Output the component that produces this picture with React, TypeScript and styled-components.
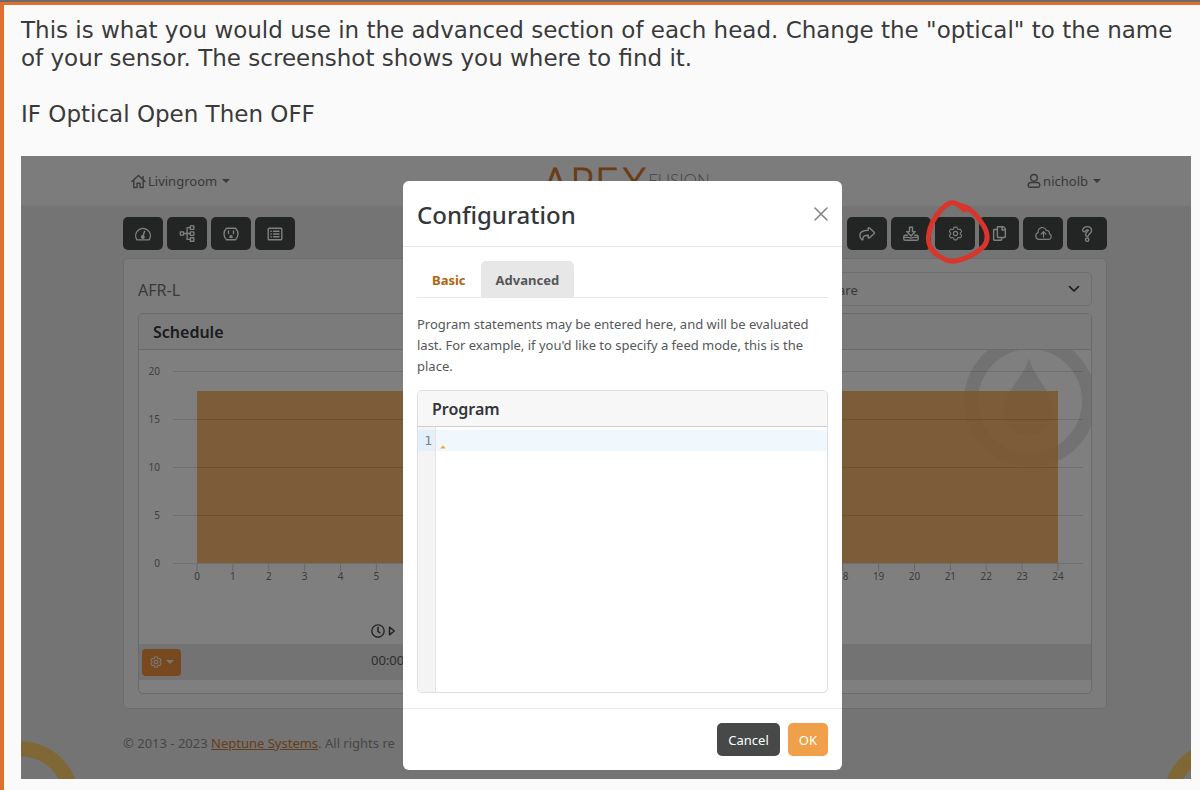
import React from "react";
import styled, { createGlobalStyle } from "styled-components";
import { HiOutlineCog6Tooth, HiOutlineCloudArrowUp } from "react-icons/hi2";
import { FaRegCopy, FaRegClock } from "react-icons/fa";

const GlobalStyle = createGlobalStyle`
  *, *::before, *::after { box-sizing: border-box; }
  body { margin: 0; background: #fafafa; }
  button, select, textarea { font: inherit; margin: 0; }
`;

const Post = styled.article`
  border-top: 3px solid #dd7230;
  border-left: 4px solid #dd7230;
  padding: 11px 9px 11px 17px;
  background: #fafafa;
`;

const TopRule = styled.div`
  height: 2px;
  background: #6f6b69;
`;

const PostText = styled.p`
  margin: 0 0 28px;
  font: 23px/28px "DejaVu Sans", Verdana, sans-serif;
  color: #3a3a3a;
`;

const Screen = styled.section`
  position: relative;
  overflow: hidden;
  background: #e9e9e9;
  color: #666;
  font: 13px/20px "Noto Sans", sans-serif;
`;

const TopBar = styled.header`
  display: flex;
  justify-content: space-between;
  align-items: center;
  height: 50px;
  padding: 0 90px 0 110px;
  background: #f6f9f7;
`;

const NavButton = styled.button`
  display: flex;
  align-items: center;
  gap: 2px;
  padding: 0;
  border: 0;
  background: none;
  color: #747474;
`;

const Caret = styled.span`
  margin-left: 3px;
  border: 4px solid transparent;
  border-top-color: currentColor;
  border-bottom: 0;
`;

const Brand = styled.div`
  display: flex;
  align-items: flex-start;
  align-self: flex-start;
  margin-right: 6px;
  color: #d9762c;
  font: 200 41px/56px "DejaVu Sans", sans-serif;
  -webkit-text-stroke: 1px currentColor;
`;

const BrandSmall = styled.span`
  margin-top: 15px;
  color: #8c8c8c;
  font: 300 17px/20px Lato, sans-serif;
  -webkit-text-stroke: 0;
`;

const Content = styled.main`
  padding: 11px 84px 0 102px;
`;

const Toolbar = styled.div`
  display: flex;
  justify-content: space-between;
  margin-bottom: 8px;
`;

const ToolGroup = styled.div`
  display: flex;
  gap: 4px;
`;

const ToolButton = styled.button`
  display: grid;
  place-items: center;
  width: 40px;
  height: 33px;
  padding: 0;
  border: 0;
  border-radius: 5px;
  background: #474a49;
  color: #fff;
`;

const Card = styled.section`
  padding: 13px 14px 14px;
  border: 1px solid #d9dbda;
  border-radius: 5px;
  background: #f6f9f7;
`;

const CardTop = styled.div`
  display: flex;
  justify-content: space-between;
  align-items: center;
  margin-bottom: 7px;
`;

const OutputName = styled.h2`
  margin: 0;
  padding-top: 2px;
  font-size: 16px;
  font-weight: 400;
  color: #747474;
`;

const SelectWrap = styled.label`
  display: grid;
  grid-template-columns: 267px;
  align-items: center;

  > * { grid-area: 1 / 1; }
  > svg { justify-self: end; margin-right: 12px; color: #333; }
`;

const Select = styled.select`
  width: 100%;
  height: 34px;
  padding: 2px 12px 0;
  appearance: none;
  border: 1px solid #dcdedd;
  border-radius: 5px;
  background: transparent;
  color: #747474;
`;

const Panel = styled.section<{ $tone: string }>`
  overflow: hidden;
  border: 1px solid ${(p) => p.$tone};
  border-radius: 5px;
  background: #fff;
`;

const PanelTitle = styled.h3<{ $tone: string }>`
  margin: 0;
  padding: 2px 14px 0;
  border-bottom: 1px solid ${(p) => p.$tone};
  background: #f7f7f7;
  color: #343638;
  font-size: 16px;
  font-weight: 600;
  line-height: 33px;
`;

const Chart = styled.svg`
  display: block;
  width: 100%;
  font: 10px "Noto Sans", sans-serif;
`;

const ScheduleTable = styled.table`
  width: 100%;
  margin-bottom: 13px;
  border-collapse: collapse;
  color: #5c5c5c;

  th, td { padding: 0; text-align: left; vertical-align: middle; }
  th { height: 28px; color: #444; }
  td { height: 36px; background: #e6e6e6; }
  td + td { padding-bottom: 4px; }
  th:first-child, td:first-child { width: 232px; padding-left: 3px; }
  th svg { vertical-align: middle; }
`;

const RowMenu = styled.button`
  display: flex;
  align-items: center;
  justify-content: center;
  width: 39px;
  height: 27px;
  padding: 0;
  border: 0;
  border-radius: 4px;
  background: #f0923e;
  color: #f2ede8;

  > svg { stroke-width: 2; }
`;

const Footer = styled.footer`
  padding: 22px 84px 24px 102px;
  line-height: 24px;
  color: #8c8c8c;

  a { color: #cc7c36; }
`;

const Ring = styled.svg<{ $side: "left" | "right" }>`
  position: absolute;
  bottom: 0;
  ${(p) => p.$side}: 0;
`;

const Backdrop = styled.div`
  position: absolute;
  inset: 0;
  display: flex;
  justify-content: center;
  align-items: flex-start;
  padding: 25px 0 9px 33px;
  background: rgba(0, 0, 0, 0.5);
`;

const Dialog = styled.div`
  width: 439px;
  border-radius: 6px;
  background: #fff;
  color: #55585a;
`;

const DialogHead = styled.div`
  display: flex;
  justify-content: space-between;
  align-items: center;
  height: 66px;
  padding: 0 14px;
  border-bottom: 1px solid #e6e6e6;
`;

const DialogTitle = styled.h1`
  margin: 0;
  padding-top: 2px;
  color: #34373a;
  font-size: 24px;
  font-weight: 500;
  line-height: 36px;
`;

const CloseButton = styled.button`
  display: grid;
  padding: 0;
  border: 0;
  background: none;
  color: #808080;
`;

const DialogBody = styled.div`
  padding: 14px 14px 15px;
`;

const Tabs = styled.div`
  display: flex;
  border-bottom: 1px solid #e6e6e6;
`;

const Tab = styled.button<{ $active?: boolean }>`
  height: 36px;
  padding: 2px 15px 0;
  border: 0;
  border-radius: 5px 5px 0 0;
  background: ${(p) => (p.$active ? "#e7e7e7" : "transparent")};
  color: ${(p) => (p.$active ? "#53575c" : "#b3640f")};
  font-weight: 700;
`;

const Help = styled.p`
  margin: 16px 0 13px;
  line-height: 21px;
`;

const Editor = styled.div`
  display: grid;
  grid-template-columns: 18px 1fr;
  height: 265px;
`;

const Gutter = styled.div`
  padding-top: 3px;
  border-right: 1px solid #e4e4e4;
  background: #f4f4f4;
`;

const LineNumber = styled.div`
  padding-right: 3px;
  background: #e3f0fb;
  color: #7d8287;
  font: 13px/21px "DejaVu Sans Mono", monospace;
  text-align: right;
`;

const Code = styled.div`
  display: grid;
  grid-template-rows: 1fr;
  padding-top: 3px;

  > * { grid-area: 1 / 1; }
  > svg { margin: 15px 0 0 4px; }
`;

const CodeInput = styled.textarea`
  width: 100%;
  padding: 0 4px;
  border: 0;
  outline: 0;
  resize: none;
  background: linear-gradient(#f0f7fd, #f0f7fd) 0 0 / 100% 21px no-repeat;
  font: 13px/21px "DejaVu Sans Mono", monospace;
`;

const DialogFoot = styled.div`
  display: flex;
  justify-content: flex-end;
  gap: 8px;
  padding: 14px;
  border-top: 1px solid #e9e9e9;
`;

const Action = styled.button<{ $primary?: boolean }>`
  height: 33px;
  padding: 0 11px;
  border: 0;
  border-radius: 5px;
  background: ${(p) => (p.$primary ? "#f0a04b" : "#464948")};
  color: #fff;
`;

const Marker = styled.svg`
  position: absolute;
  top: 42px;
  right: 199px;
`;

const Line = ({ w = 18, h = 18, size = w, children }: { w?: number; h?: number; size?: number; children: React.ReactNode }) => (
  <svg width={size} height={(size * h) / w} viewBox={`0 0 ${w} ${h}`} fill="none" stroke="currentColor" strokeWidth="1.4" strokeLinejoin="round" strokeLinecap="round" aria-hidden="true">
    {children}
  </svg>
);

const leftTools: [string, React.ReactNode][] = [
  ["Dashboard", <Line><path d="M2.700 14.500a7.300 7.300 0 1 1 12.600 0c-.2.300-.4.400-.7.400H3.400c-.3 0-.5-.1-.7-.4Z" /><circle cx="8.800" cy="12.100" r="1.300" fill="currentColor" /><path d="M9 11 10.600 6.300" /></Line>],
  ["Network", <Line size={17}><path d="M1.400 7.300h3.400v3.400H1.400zM12 .9h3.700v3.700H12zM12 7.200h3.700v3.700H12zM12 13.500h3.700v3.700H12zM4.800 9H12M12 2.800H8.600v12.500H12" /></Line>],
  ["Outlets", <Line><path d="M4.500 3.300h9c1.700 1.600 2.500 3.500 2.500 5.700s-.8 4.100-2.500 5.700h-9C2.800 13.100 2 11.200 2 9s.8-4.100 2.500-5.700Z" /><path d="M6.500 6v2.500M11.500 6v2.500M8 12.400v-.6a1 1 0 0 1 2 0v.6Z" /></Line>],
  ["Log", <Line><rect x="2.200" y="3.300" width="13.600" height="11.400" rx="1" /><path d="M4.900 6.300h.4M4.900 9h.4M4.900 11.700h.4M7.500 6.300H13M7.500 9H13M7.500 11.700H13" /></Line>],
];

const rightTools: [string, React.ReactNode][] = [
  ["Share", <Line><path d="M10.300 3.200c0-.6.6-.8 1-.4l4.900 4.500c.4.3.4.8 0 1.100l-4.900 4.500c-.4.4-1 .1-1-.4v-2.200C7 10.300 5 10.700 4.900 13.200c0 .8.300 1.500-.1 1.700-.4.1-.8-.2-1.100-.5-1.100-1-1.900-2.400-1.900-4C1.900 6.800 5.500 5.400 10.300 5.300Z" /></Line>],
  ["Download", <Line><path d="M7.500 2.300h3v4.300h2.800L9 11 4.700 6.600h2.800ZM5.300 10.300H3.200c-.8 0-1.400.6-1.400 1.400v2.200c0 .8.600 1.400 1.400 1.400h11.600c.8 0 1.400-.6 1.400-1.400v-2.200c0-.8-.6-1.400-1.400-1.400h-2.100M2 12.400h4.300l2.700.8 2.700-.8H16" /></Line>],
  ["Configuration", <HiOutlineCog6Tooth size={17} />],
  ["Copy", <FaRegCopy size={15} />],
  ["Upload", <HiOutlineCloudArrowUp size={19} />],
  ["Help", (
    <svg width="18" height="18" viewBox="0 0 18 18" fill="none" strokeLinecap="round" strokeLinejoin="round" aria-hidden="true">
      {[["#fff", 4.6], ["#474a49", 1.9]].map(([c, w]) => (
        <g key={c} stroke={c as string} strokeWidth={w}>
          <path d="M6.300 5.200C6.900 3.800 8 3.300 9.200 3.300c1.600 0 2.700.9 2.700 2.300 0 2-2.700 2-2.700 4.200" />
          <path d="M9.200 14.600v.1" />
        </g>
      ))}
    </svg>
  )],
];

const hourX = (h: number) => 58 + h * 35.875;

function ScheduleChart() {
  return (
    <Chart viewBox="0 0 952 266" role="img" aria-label="Schedule">
      <g fill="#e4e4e4">
        <path fillRule="evenodd" d="M891-15a66 66 0 1 0 0 132 66 66 0 0 0 0-132Zm0 14a52 52 0 1 1 0 104 52 52 0 0 1 0-104Z" />
        <path d="M890 7c2 17 23 34 24 53 0 15-11 25-25 25s-25-10-25-25c1-19 24-36 26-53Z" />
      </g>
      <path d="M58 41H919V213H58Z" fill="#f7ae5f" fillOpacity="0.88" />
      {[20, 15, 10, 5, 0].map((v, i) => (
        <g key={v}>
          <path d={`M34 ${21.5 + i * 48}H944`} stroke="#000" strokeOpacity="0.12" />
          <text x="21" y={25 + i * 48} textAnchor="end" fill="#808080">{v}</text>
        </g>
      ))}
      {Array.from({ length: 25 }, (_, h) => (
        <g key={h}>
          <path d={`M${hourX(h)} 213v8`} stroke="#cfcfcf" />
          <text x={hourX(h)} y="230" textAnchor="middle" fill="#787878">{h}</text>
        </g>
      ))}
    </Chart>
  );
}

export default function App() {
  return (
    <>
      <GlobalStyle />
      <TopRule />
      <Post>
        <PostText>
          This is what you would use in the advanced section of each head. Change the "optical" to the name of your sensor. The screenshot shows you where to find it.
        </PostText>
        <PostText>IF Optical Open Then OFF</PostText>

        <Screen>
          <TopBar>
            <NavButton type="button">
              <Line w={15} h={15}><path d="M1 7.500 7.500 1.500 14 7.500M2.800 6v7.500h3.200V9.300h3v4.200h3.200V6M12 5.500V2.500" /></Line>
              Livingroom
              <Caret />
            </NavButton>
            <Brand>APEX<BrandSmall>FUSION</BrandSmall></Brand>
            <NavButton type="button">
              <Line w={14} h={16}><circle cx="7" cy="4.800" r="3.300" /><path d="M3.800 9.500h6.400c1.500 0 2.600 1.300 2.600 2.800 0 1.200-.4 1.900-1.500 1.900H2.700c-1.100 0-1.500-.7-1.500-1.900 0-1.500 1.100-2.800 2.600-2.800Z" /></Line>
              nicholb
              <Caret />
            </NavButton>
          </TopBar>

          <Content>
            <Toolbar>
              <ToolGroup>
                {leftTools.map(([name, icon]) => <ToolButton key={name} type="button" aria-label={name}>{icon}</ToolButton>)}
              </ToolGroup>
              <ToolGroup>
                {rightTools.map(([name, icon]) => <ToolButton key={name} type="button" aria-label={name}>{icon}</ToolButton>)}
              </ToolGroup>
            </Toolbar>

            <Card>
              <CardTop>
                <OutputName>AFR-L</OutputName>
                <SelectWrap>
                  <Select aria-label="Output view"><option>are</option></Select>
                  <svg width="12" height="12" viewBox="0 0 12 12" fill="none" stroke="currentColor" strokeWidth="1.6" strokeLinecap="round" strokeLinejoin="round" aria-hidden="true"><path d="m1.500 3.500 4.500 4.500 4.500-4.500" /></svg>
                </SelectWrap>
              </CardTop>
              <Panel $tone="#d4d4d4">
                <PanelTitle $tone="#d4d4d4">Schedule</PanelTitle>
                <ScheduleChart />
                <ScheduleTable>
                  <thead>
                    <tr>
                      <th />
                      <th aria-label="Start time">
                        <FaRegClock size={14} />{" "}
                        <svg width="8" height="10" viewBox="0 0 8 10" fill="none" stroke="currentColor" strokeWidth="1.500" strokeLinejoin="round" aria-hidden="true"><path d="M1.500 1.200 6.300 5l-4.800 3.800Z" /></svg>
                      </th>
                    </tr>
                  </thead>
                  <tbody>
                    <tr>
                      <td><RowMenu type="button" aria-label="Row options"><HiOutlineCog6Tooth size={14} /><Caret /></RowMenu></td>
                      <td>00:00</td>
                    </tr>
                  </tbody>
                </ScheduleTable>
              </Panel>
            </Card>
          </Content>

          <Footer>
            © 2013 - 2023 <a href="#neptune">Neptune Systems</a>. All rights re
          </Footer>

          <Ring $side="left" width="60" height="40" viewBox="0 0 60 40" fill="none" stroke="#ffd06a" strokeWidth="15" aria-hidden="true"><circle cx="0" cy="60" r="50" /></Ring>
          <Ring $side="right" width="60" height="40" viewBox="0 0 60 40" fill="none" stroke="#ffd06a" strokeWidth="15" aria-hidden="true"><circle cx="90" cy="60" r="50" /></Ring>

          <Backdrop>
            <Dialog role="dialog" aria-labelledby="dialog-title">
              <DialogHead>
                <DialogTitle id="dialog-title">Configuration</DialogTitle>
                <CloseButton type="button" aria-label="Close">
                  <svg width="14" height="14" viewBox="0 0 14 14" stroke="currentColor" strokeWidth="1.500" strokeLinecap="round" aria-hidden="true"><path d="M1 1 13 13M13 1 1 13" /></svg>
                </CloseButton>
              </DialogHead>
              <DialogBody>
                <Tabs role="tablist">
                  <Tab type="button" role="tab" aria-selected="false">Basic</Tab>
                  <Tab type="button" role="tab" aria-selected="true" $active>Advanced</Tab>
                </Tabs>
                <Help>
                  Program statements may be entered here, and will be evaluated last. For example, if you'd like to specify a feed mode, this is the place.
                </Help>
                <Panel $tone="#dedede">
                  <PanelTitle $tone="#cfcfcf">Program</PanelTitle>
                  <Editor>
                    <Gutter><LineNumber>1</LineNumber></Gutter>
                    <Code>
                      <CodeInput aria-label="Program" />
                      <svg width="6" height="4" viewBox="0 0 6 4" aria-hidden="true"><path d="M.2 3.500 3 .2l2.800 3.300Z" fill="#eda93c" /></svg>
                    </Code>
                  </Editor>
                </Panel>
              </DialogBody>
              <DialogFoot>
                <Action type="button">Cancel</Action>
                <Action type="button" $primary>OK</Action>
              </DialogFoot>
            </Dialog>
          </Backdrop>

          <Marker width="70" height="70" viewBox="922 198 70 70" fill="none" stroke="#d8352c" strokeWidth="5" strokeLinecap="round" strokeLinejoin="round" aria-hidden="true">
            <path d="M964 210C960 205 955 202 950 203 941 207 931 221 929 233 927 242 929 248 936 254 942 258 947 262 955 261 966 259 976 254 984 246 990 238 987 230 981 222 976 214 970 207 959 205" />
          </Marker>
        </Screen>
      </Post>
    </>
  );
}
